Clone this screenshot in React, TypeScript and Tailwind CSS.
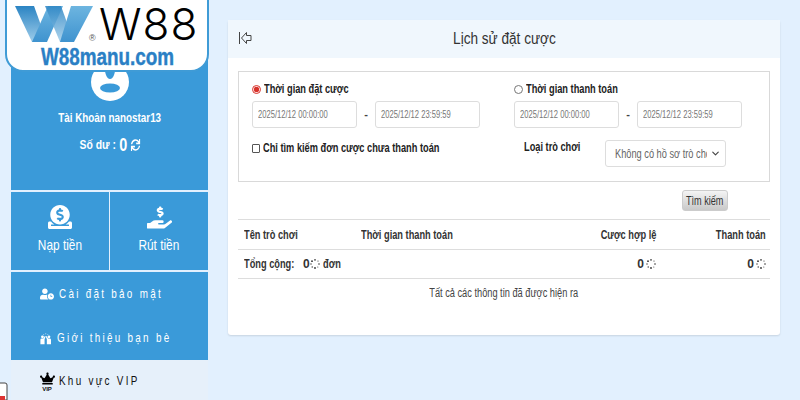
import { ChevronDown } from 'lucide-react';
import { FaCrown, FaDonate, FaHandHoldingUsd, FaSync, FaUserClock } from 'react-icons/fa';

const arial = "font-['Liberation_Sans',Arial,sans-serif]";
// the reference is squeezed horizontally, so text gets narrowed the same way
const squeezeLeft = 'inline-block origin-left scale-x-[.77] whitespace-nowrap';
const squeezeRight = 'inline-block origin-right scale-x-[.77] whitespace-nowrap';

const BackIcon = () => (
  <svg width="14" height="14" viewBox="0 0 14 14" fill="none" stroke="#444" strokeWidth="1">
    <path d="M1.5 1v12" />
    <path d="M3.5 7l5-5.5v3h4.5v5H8.500v3z" />
  </svg>
);

const Spinner = () => (
  <svg width="10" height="10" viewBox="0 0 10 10" className="inline-block shrink-0 align-[-1px]" fill="#333">
    <circle cx="5" cy="0.9" r="0.8" />
    <circle cx="8" cy="2" r="0.6" />
    <circle cx="9" cy="5" r="0.8" />
    <circle cx="7.800" cy="8" r="0.5" />
    <circle cx="5" cy="9" r="0.9" />
    <circle cx="2.200" cy="8" r="0.7" />
    <circle cx="1" cy="5" r="0.7" />
    <circle cx="2" cy="2.200" r="0.9" />
  </svg>
);

const FriendsIcon = () => (
  <svg width="14" height="15" viewBox="0 0 14 14" fill="#fff">
    <circle cx="3" cy="5" r="1.7" />
    <circle cx="11" cy="5" r="1.7" />
    <path d="M0.500 14V8.500Q0.500 7 2 7h2l2-3 1 .6L5.600 8v6zM13.500 14V8.500Q13.500 7 12 7h-2L8 4l-1 .6L8.400 8v6z" />
    <path d="M4 1.500l.8 1M7 0.500v1.400M10 1.500l-.8 1" stroke="#fff" strokeWidth="0.7" />
  </svg>
);

const AvatarIcon = () => (
  <svg width="38" height="38" viewBox="0 0 38 38">
    <circle cx="19" cy="19" r="19" fill="#fff" />
    <path d="M13 0h12q-1 16-6 16t-6-16z" fill="#3a9ad9" />
    <ellipse cx="19" cy="25" rx="10" ry="4.500" fill="#3a9ad9" />
  </svg>
);

const Logo = () => (
  <div className="absolute left-[5px] top-[-10px] z-10 h-[82px] w-[204px] rounded-b-[18px] border-2 border-[#3f9bd6] bg-white">
    <svg width="78" height="36" viewBox="0 0 78 36" className="absolute left-[8px] top-[14px]">
      <defs>
        <linearGradient id="wg" x1="0" y1="0" x2="0" y2="1">
          <stop offset="0" stopColor="#2b84c3" />
          <stop offset="1" stopColor="#9fcdea" />
        </linearGradient>
        <linearGradient id="wd" x1="0" y1="1" x2="0" y2="0">
          <stop offset="0" stopColor="#3f93cf" />
          <stop offset="1" stopColor="#6db5e0" />
        </linearGradient>
      </defs>
      <path d="M0 0H19L32 36H17z" fill="url(#wg)" />
      <path d="M17 36H32L48 0H33z" fill="url(#wd)" />
      <path d="M30 0H46L59 36H45z" fill="url(#wg)" opacity="0.85" />
      <path d="M45 36H59L78 0H56z" fill="url(#wd)" />
    </svg>
    <span className={`absolute left-[82px] top-[42px] text-[9px] leading-none text-[#555] ${arial}`}>®</span>
    <span className="absolute left-[92px] top-[10px] font-['Inter',sans-serif] text-[44px] font-light leading-[44px] tracking-[1px] text-black">
      W88
    </span>
    <span
      className={`absolute left-[34px] top-[55px] origin-left scale-x-[.82] text-[23px] font-bold leading-[21px] text-[#2a7fc5] [-webkit-text-stroke:0.4px_#2a7fc5] ${arial}`}
    >
      W88manu.com
    </span>
  </div>
);

const Sidebar = () => (
  <aside className={`ml-[11px] flex h-[400px] w-[197px] shrink-0 flex-col overflow-hidden text-white ${arial}`}>
    <div className="flex h-[190px] shrink-0 flex-col items-center bg-[#3a9ad9]">
      <div className="mt-[63px]">
        <AvatarIcon />
      </div>
      <p className="mt-[9px] scale-x-[.82] whitespace-nowrap text-[12px] font-bold leading-[16px]">Tài Khoản nanostar13</p>
      <p className="mt-[8px] flex scale-x-[.8] items-center gap-[4px] whitespace-nowrap text-[13px] font-bold leading-[22px]">
        Số dư :<span className="text-[18px]">0</span>
        <FaSync size={12} />
      </p>
    </div>
    <div className="mt-[2px] flex h-[78px] shrink-0 gap-[1px]">
      <div className="flex w-[98px] flex-col items-center bg-[#3a9ad9] pt-[13px]">
        <FaDonate size={24} />
        <span className="mt-[6px] scale-x-[.79] whitespace-nowrap text-[15px] leading-[20px]">Nạp tiền</span>
      </div>
      <div className="flex flex-1 flex-col items-center bg-[#3a9ad9] pt-[13px]">
        <FaHandHoldingUsd size={25} />
        <span className="mt-[5px] scale-x-[.79] whitespace-nowrap text-[15px] leading-[20px]">Rút tiền</span>
      </div>
    </div>
    <div className="mt-[2px] h-[88px] shrink-0 bg-[#3a9ad9] pl-[29px] text-[13px] tracking-[3px]">
      <div className="flex h-[44px] items-center gap-[5px]">
        <FaUserClock size={14} />
        <span className="inline-block origin-left scale-x-[.76] whitespace-nowrap">Cài đặt bảo mật</span>
      </div>
      <div className="flex h-[44px] items-center gap-[6px]">
        <FriendsIcon />
        <span className="inline-block origin-left scale-x-[.76] whitespace-nowrap">Giới thiệu bạn bè</span>
      </div>
    </div>
    <div className="flex h-[40px] items-center gap-[5px] bg-[#e6f0fa] pl-[29px] pt-[2px] text-[13px] tracking-[3px] text-[#111]">
      <span className="flex w-[14px] flex-col items-center">
        <FaCrown size={15} className="text-black" />
        <span className="text-[6px] font-bold leading-[6px] tracking-normal">VIP</span>
      </span>
      <span className="inline-block origin-left scale-x-[.76] whitespace-nowrap">Khu vực VIP</span>
    </div>
  </aside>
);

const DateInput = ({ value }: { value: string }) => (
  <div className="flex h-[27px] w-[105px] items-center rounded-[3px] border border-[#ddd] bg-white px-[5px] text-[10px] text-[#777]">
    <span className="inline-block origin-left scale-x-[.76] whitespace-nowrap">{value}</span>
  </div>
);

const DateRange = ({ from, to }: { from: string; to: string }) => (
  <div className="flex items-center">
    <DateInput value={from} />
    <span className="w-[18px] text-center text-[11px] font-bold text-[#444]">-</span>
    <DateInput value={to} />
  </div>
);

const RadioLabel = ({ label, checked }: { label: string; checked?: boolean }) => (
  <label className="flex h-[18px] items-center gap-[3px] text-[12px] font-bold text-[#222]">
    <input
      type="radio"
      name="time"
      defaultChecked={checked}
      className="m-0 h-[9px] w-[9px] accent-[#d8322a]"
    />
    <span className={squeezeLeft}>{label}</span>
  </label>
);

const Filters = () => (
  <div className="flex h-[111px] border border-[#d9d9d9] pl-[13px] pt-[8px]">
    <div className="w-[262px]">
      <RadioLabel label="Thời gian đặt cược" checked />
      <div className="mt-[3px]">
        <DateRange from="2025/12/12 00:00:00" to="2025/12/12 23:59:59" />
      </div>
      <label className="mt-[13px] flex h-[14px] items-center gap-[3px] text-[12px] font-bold text-[#222]">
        <input type="checkbox" className="m-0 h-[9px] w-[8px] appearance-none rounded-[1px] border border-[#555] bg-white" />
        <span className={squeezeLeft}>Chỉ tìm kiếm đơn cược chưa thanh toán</span>
      </label>
    </div>
    <div>
      <RadioLabel label="Thời gian thanh toán" />
      <div className="mt-[3px]">
        <DateRange from="2025/12/12 00:00:00" to="2025/12/12 23:59:59" />
      </div>
      <div className="mt-[12px] flex items-start pl-[10px]">
        <span className="w-[81px] text-[12px] font-bold leading-[14px] text-[#222]">
          <span className={squeezeLeft}>Loại trò chơi</span>
        </span>
        <div className="flex h-[27px] w-[121px] items-center rounded-[3px] border border-[#ddd] bg-white pl-[9px] pr-[4px] text-[12px] text-[#666]">
          <span className="w-[92px] overflow-hidden whitespace-nowrap">
            <span className={squeezeLeft}>Không có hồ sơ trò chơi</span>
          </span>
          <ChevronDown size={11} strokeWidth={2.5} className="ml-auto text-[#444]" />
        </div>
      </div>
    </div>
  </div>
);

const Results = () => (
  <div className="mt-[8px] text-[12px] text-[#333]">
    <div className="flex h-[30px] items-center border-t border-[#ddd] pl-[6px] pr-[4px] font-bold">
      <span className="w-[117px]">
        <span className={squeezeLeft}>Tên trò chơi</span>
      </span>
      <span className="flex-1">
        <span className={squeezeLeft}>Thời gian thanh toán</span>
      </span>
      <span className="w-[110px] text-right">
        <span className={squeezeRight}>Cược hợp lệ</span>
      </span>
      <span className="w-[110px] text-right">
        <span className={squeezeRight}>Thanh toán</span>
      </span>
    </div>
    <div className="flex h-[30px] items-center border-y border-[#ddd] pl-[6px] pr-[4px] font-bold">
      <span className="flex flex-1 items-center">
        <span className="w-[59px]">
          <span className={squeezeLeft}>Tổng cộng:</span>
        </span>
        <span className="w-[7px]">0</span>
        <Spinner />
        <span className={`ml-[3px] ${squeezeLeft}`}>đơn</span>
      </span>
      <span className="flex w-[108px] items-center justify-end gap-[2px]">
        0 <Spinner />
      </span>
      <span className="flex w-[110px] items-center justify-end gap-[2px]">
        0 <Spinner />
      </span>
    </div>
    <p className="mt-[6px] text-center text-[12px] leading-[16px] text-[#444]">
      <span className="inline-block origin-center scale-x-[.77] whitespace-nowrap">Tất cả các thông tin đã được hiện ra</span>
    </p>
  </div>
);

const Main = () => (
  <main className={`ml-[20px] mt-[20px] h-[315px] w-[552px] shrink-0 rounded-[3px] bg-white shadow-[0_1px_2px_rgba(0,0,0,0.12)] ${arial}`}>
    <header className="relative flex h-[38px] items-center justify-center bg-[#f0f7fd] text-[16px] text-[#333]">
      <span className="absolute left-[10px] top-[11px]">
        <BackIcon />
      </span>
      <span className="inline-block origin-center scale-x-[.85] whitespace-nowrap">Lịch sử đặt cược</span>
    </header>
    <div className="px-[10px] pt-[13px]">
      <Filters />
      <div className="mt-[8px] flex justify-end pr-[42px]">
        <button
          type="button"
          className="flex h-[21px] w-[46px] items-center justify-center rounded-[3px] border border-[#ccc] bg-gradient-to-b from-[#f4f4f4] to-[#c9c9c9] text-[12px] text-[#333]"
        >
          <span className="inline-block shrink-0 origin-center scale-x-[.76] whitespace-nowrap">Tìm kiếm</span>
        </button>
      </div>
      <Results />
    </div>
  </main>
);

const PhoneWidget = () => (
  <svg width="8" height="18" viewBox="0 0 8 18" className="absolute bottom-0 left-0 z-10">
    <path d="M-3 1h8q2 0 2 2v15H-3z" fill="#fff" stroke="#444" strokeWidth="1" />
    <path d="M-2 14h7v4h-7z" fill="#d33" />
  </svg>
);

const App = () => (
  <div className="relative flex h-[400px] w-[800px] overflow-hidden bg-[#e2f0fe]">
    <Logo />
    <PhoneWidget />
    <Sidebar />
    <Main />
  </div>
);

export default App;
